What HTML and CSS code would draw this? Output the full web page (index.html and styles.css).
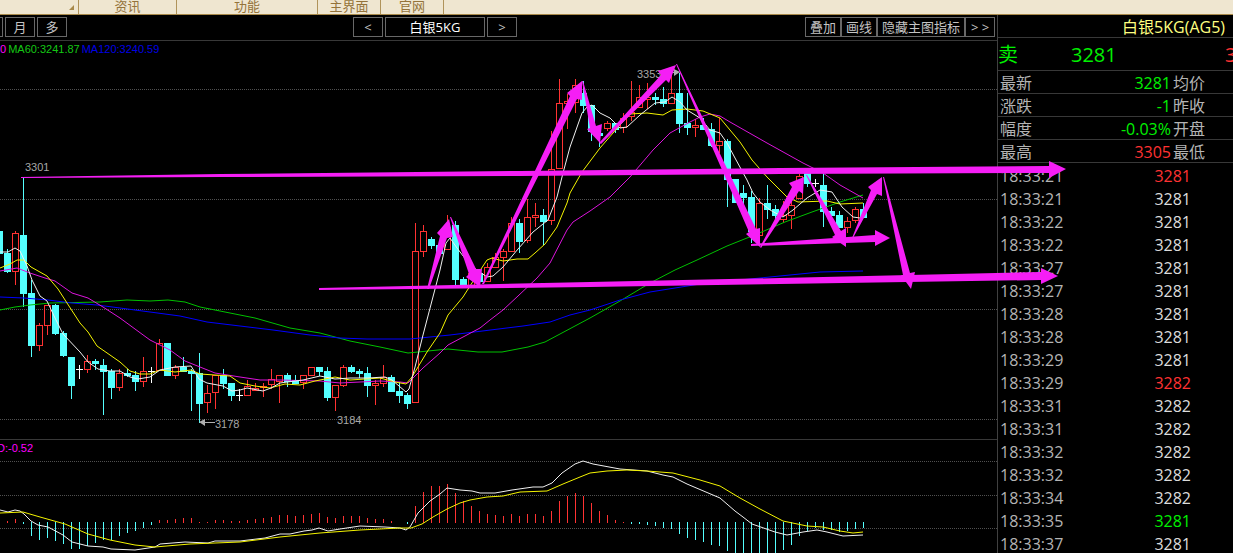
FILE: index.html
```html
<!DOCTYPE html>
<html lang="zh-CN">
<head>
<meta charset="utf-8">
<title>白银5KG</title>
<link rel="stylesheet" href="styles.css">
</head>
<body>
<nav class="menu">
  <span class="menu-item menu-corner"><svg class="corner" viewBox="0 0 5 5"><path d="M5 0V5H0Z"/></svg></span>
  <a class="menu-item menu-mid" href="#">资讯</a>
  <a class="menu-item menu-wide" href="#">功能</a>
  <a class="menu-item" href="#">主界面</a>
  <a class="menu-item" href="#">官网</a>
</nav>
<main class="workspace">
  <section class="charts">
    <div class="toolbar">
      <div class="group periods"><button class="btn btn-cut" aria-label="周"></button><button class="btn">月</button><button class="btn">多</button></div>
      <div class="group"><button class="btn">&lt;</button><button class="btn btn-name">白银5KG</button><button class="btn">&gt;</button></div>
      <div class="group tools"><button class="btn btn-tool">叠加</button><button class="btn btn-tool">画线</button><button class="btn btn-tool btn-long">隐藏主图指标</button><button class="btn">&gt; &gt;</button></div>
    </div>
    <div class="legend"><span class="c-magenta">0</span><span class="c-green">MA60:3241.87</span><span class="c-blue">MA120:3240.59</span></div>
    <svg class="plot" viewBox="0 59 997 380">
      <path class="grid" d="M0 89.500H997M0 199.500H997M0 309.500H997M0 419.500H997"/>
      <g id="candles"></g>
      <polyline class="line s-green" points="0,310 15,307 30,305 50,303 100,302 127,300 150,301 168,300 185,302 200,307 220,311 255,318 290,328 320,333 350,341 380,347 408,353 448,349 478,352 502,352 528,347 545,342 590,318 620,301 650,283 675,270 697,260 727,246 757,234 785,222 812,212 840,202 863,195"/>
      <polyline class="line s-blue" points="0,297 24,298 48,300 72,303 97,305 120,308 150,312 180,316 207,322 240,326 273,330 310,335 340,338 367,339 410,339 450,335 523,326 550,322 570,315 590,310 620,300 650,292 700,284 750,279 790,275 820,272 863,271"/>
      <polyline class="line s-magenta" points="0,271 17,268 30,273 45,278 55,281 72,293 88,298 103,307 120,318 150,340 170,350 185,361 200,367 215,373 240,377 260,380 280,380 320,381 340,383 360,382 380,381 400,382 408,383 423,368 440,353 448,345 480,328 490,320 503,310 518,296 537,278 550,263 567,230 573,222 590,211 610,197 630,177 653,150 670,133 690,122 700,117 710,114 720,116 730,122 767,143 803,163 823,173 840,185 863,198"/>
      <polyline class="line s-yellow" points="0,268 10,264 17,260 24,260 31,267 47,276 58,289 67,303 80,323 88,332 97,346 110,355 120,362 130,371 140,374 150,374 160,370 175,372 191,370 200,374 215,375 230,376 240,383 255,386 270,388 285,384 300,385 315,381 335,377 350,380 380,378 395,382 406,384 412,377 427,352 440,333 448,315 463,297 477,275 487,260 492,258 503,261 517,259 528,259 535,253 545,244 557,227 567,203 570,193 582,172 600,148 620,125 630,114 647,113 663,115 672,110 687,109 703,111 720,118 740,142 752,160 767,177 787,197 798,202 827,201 840,204 863,203"/>
      <polyline class="line s-white" points="0,252 8,252 15,248 20,251 27,266 32,280 40,296 47,301 55,318 63,334 80,352 88,362 98,369 110,371 120,371 130,377 138,379 150,377 160,370 175,367 191,366 199,379 207,383 223,386 232,391 240,390 247,388 263,391 271,388 280,383 295,381 303,380 320,376 335,379 350,378 368,378 385,377 392,380 399,386 406,392 409,389 415,367 423,335 440,270 446,243 450,238 457,248 470,265 487,277 493,276 503,267 518,249 533,232 548,220 557,197 563,173 570,147 582,113 587,107 592,105 600,113 610,118 620,128 627,127 640,115 655,103 665,102 672,97 680,102 687,110 700,118 710,130 720,133 727,143 735,158 747,180 753,193 760,202 770,210 783,217 793,210 807,198 820,190 832,192 842,207 853,217 860,218"/>
      <g class="note"><text x="25" y="171">3301</text><text x="215" y="428">3178</text><text x="337" y="424">3184</text><text x="637" y="78">3353</text></g>
      <path class="pointer" d="M215 422.500H203M662 72.500H676"/>
      <path class="pointer-head" d="M199 422L205 419V426ZM680 72L674 69V76Z"/>
    </svg>
    <div class="legend legend-sub"><span class="c-magenta">D:-0.52</span></div>
    <svg class="plot" viewBox="0 458 997 95">
      <path class="grid" d="M0 461.500H997M0 495.500H997M0 528.500H997"/>
      <g id="bars"></g>
      <polyline class="line s-white" points="0,510 8,512 15,510 20,511 24,514 31,521 38,525 48,527 63,535 72,542 80,544 88,546 103,547 111,549 135,550 155,547 160,544 185,542 208,543 215,541 240,541 265,538 280,534 290,534 304,531 312,530 319,528 328,531 340,529 360,526 385,527 400,528 406,530 410,527 418,513 430,501 440,494 447,488 460,490 472,491 480,493 495,493 512,490 533,487 543,487 552,483 562,473 575,464 583,461 593,464 620,469 647,471 663,475 673,477 687,484 720,498 735,511 743,517 752,524 775,532 787,535 803,532 817,530 827,532 843,536 863,535"/>
      <polyline class="line s-yellow" points="0,513 23,512 40,517 65,524 88,534 110,540 135,545 155,547 190,544 240,542 280,537 320,533 360,530 400,528 411,528 422,524 433,517 447,509 460,503 470,500 487,497 503,496 520,492 547,491 563,484 580,477 590,473 607,471 627,470 647,471 673,473 700,480 720,486 740,498 760,509 783,521 807,526 823,527 840,531 853,533 863,532"/>
    </svg>
  </section>
  <aside class="quote">
    <h1 class="symbol">白银5KG(AG5)</h1>
    <div class="ask"><span>卖</span><span class="ask-price">3281</span><span class="c-red">3282</span></div>
    <table class="stats">
      <tr><th>最新</th><td class="c-lime">3281</td><th>均价</th></tr>
      <tr><th>涨跌</th><td class="c-lime">-1</td><th>昨收</th></tr>
      <tr><th>幅度</th><td class="c-lime">-0.03%</td><th>开盘</th></tr>
      <tr><th>最高</th><td class="c-red">3305</td><th>最低</th></tr>
    </table>
    <table class="ticks">
      <tr><td>18:33:21</td><td class="c-red">3281</td></tr>
      <tr><td>18:33:21</td><td>3281</td></tr>
      <tr><td>18:33:22</td><td>3281</td></tr>
      <tr><td>18:33:22</td><td>3281</td></tr>
      <tr><td>18:33:27</td><td>3281</td></tr>
      <tr><td>18:33:27</td><td>3281</td></tr>
      <tr><td>18:33:28</td><td>3281</td></tr>
      <tr><td>18:33:28</td><td>3281</td></tr>
      <tr><td>18:33:29</td><td>3281</td></tr>
      <tr><td>18:33:29</td><td class="c-red">3282</td></tr>
      <tr><td>18:33:31</td><td>3282</td></tr>
      <tr><td>18:33:31</td><td>3282</td></tr>
      <tr><td>18:33:32</td><td>3282</td></tr>
      <tr><td>18:33:32</td><td>3282</td></tr>
      <tr><td>18:33:34</td><td>3282</td></tr>
      <tr><td>18:33:35</td><td class="c-lime">3281</td></tr>
      <tr><td>18:33:37</td><td>3281</td></tr>
    </table>
  </aside>
  <svg class="arrows" viewBox="0 15 1233 538">
    <path d="M21 177L220 174L520 171L780 168L1049 166V161L1066 169L1049 178V173L780 174L520 176L220 177L21 178Z"/>
    <path d="M319 288L590 282L780 278L1041 272V268L1058 276L1041 284V280L780 284L590 287L319 290Z"/>
    <path d="M427 289L440 236L437 233L449 219L453 237L447 238L429 289Z"/>
    <path d="M450 217L469 274L466 277L480 287L482 269L476 269L451 217Z"/>
    <path d="M482 284L570 96L567 93L582 81V100L577 99L484 284Z"/>
    <path d="M582 81L590 128L587 129L600 143L602 124L596 126L583 81Z"/>
    <path d="M599 143L661 75L658 71L676 65L669 83L666 80L601 144Z"/>
    <path d="M676 64L749 232L746 234L760 247V228L756 229L677 64Z"/>
    <path d="M760 247L792 187L789 183L804 177L803 194L799 191L761 248Z"/>
    <path d="M806 175L835 235L832 237L846 247V228L841 231L807 175Z"/>
    <path d="M751 244L875 235V230L890 238L875 246V242L751 246Z"/>
    <path d="M852 238L871 190L868 187L882 177V196L877 194L853 238Z"/>
    <path d="M883 177L903 275L901 275L911 289L915 272L910 273L884 177Z"/>
  </svg>
</main>
<script src="chart.js"></script>
</body>
</html>
```

FILE: styles.css
```css
* { box-sizing: border-box; }

body {
  margin: 0;
  overflow: hidden;
  background: #000;
  color: #b4b4b4;
  font-family: "Open Sans", "Noto Sans CJK SC", sans-serif;
}

.menu {
  display: flex;
  height: 15px;
  background: #efe6d0;
  border-bottom: 1px solid #a8894a;
}

.menu-item {
  width: 63px;
  border-right: 1px solid #b0935a;
  color: #94733a;
  font-size: 13px;
  line-height: 12px;
  text-align: center;
  text-decoration: none;
  white-space: nowrap;
}

.menu-corner { display: flex; width: 79px; justify-content: flex-end; align-items: flex-end; padding: 0 4px 4px 0; }
.menu-mid { width: 98px; }
.menu-wide { width: 141px; }
.corner { width: 5px; height: 5px; fill: #a8894a; }

.workspace {
  position: relative;
  display: flex;
  height: calc(100vh - 15px);
  overflow: hidden;
}

.charts { flex: 1; min-width: 0; }

.toolbar {
  display: grid;
  grid-template-columns: 353px auto 1fr;
  height: 26px;
  padding-top: 2px;
  border-bottom: 1px solid #383838;
}

.group { display: flex; gap: 2px; }
.tools { justify-content: flex-end; gap: 0; padding-right: 2px; }

.btn {
  width: 30px;
  height: 20px;
  padding: 0;
  border: 1px solid #686868;
  background: #000;
  color: #c4c4c4;
  font: 13px/16px "Open Sans", "Noto Sans CJK SC", sans-serif;
  white-space: nowrap;
}

.btn-cut { width: 3px; border-left: 0; }
.btn-name { width: 100px; color: #fff; }
.btn-tool { width: 36px; }
.btn-long { width: 88px; }

.legend {
  display: flex;
  gap: 2px;
  height: 18px;
  font: 11px/17px "Liberation Sans", Arial, sans-serif;
}

.legend-sub { height: 19px; border-top: 1px solid #383838; }
.legend-sub span { margin-left: -3px; }

.plot { display: block; width: 100%; }

.grid { stroke: #505050; stroke-dasharray: 1 1; shape-rendering: crispEdges; }
.line { fill: none; stroke-width: 1; }
.s-white { stroke: #f0f0f0; }
.s-yellow { stroke: #f4f400; }
.s-magenta { stroke: #dc14dc; }
.s-green { stroke: #00c000; }
.s-blue { stroke: #0000ff; }

.note { fill: #a8a8a8; font: 11px "Liberation Sans", Arial, sans-serif; }
.pointer { stroke: #b0b0b0; }
.pointer-head { fill: #b0b0b0; }

.up, .down, .flat { shape-rendering: crispEdges; }
.up { fill: none; stroke: #ff3232; }
.down { fill: #54ffff; stroke: #54ffff; }
.flat { stroke: #fff; }

.c-magenta { color: #f0f; }
.c-green { color: #14c814; }
.c-blue { color: #0000e6; }

.quote {
  width: 236px;
  overflow: hidden;
  border-left: 1px solid #404040;
}

.symbol {
  height: 23px;
  margin: 0;
  padding-right: 8px;
  border-bottom: 1px solid #383838;
  color: #ffff80;
  font-size: 16px;
  font-weight: 400;
  line-height: 24px;
  text-align: right;
}

.ask {
  display: flex;
  height: 33px;
  border-bottom: 1px solid #383838;
  color: #00f000;
  font-size: 20px;
  line-height: 33px;
}

.ask span { flex: none; }
.ask span:first-child { width: 73px; }
.ask-price { width: 154px; font-weight: 500; }

.stats, .ticks { border-spacing: 0; table-layout: fixed; width: 100%; font-size: 16px; line-height: 20px; }
.stats th, .stats td { height: 23px; padding: 2px 0 0; border-bottom: 1px solid #383838; }
.stats th {
  width: 60px;
  padding-left: 2px;
  font-weight: 400;
  text-align: left;
}
.stats td { width: 113px; text-align: right; }
.stats th:last-child { width: auto; }

.ticks td { height: 23px; padding: 2px 0 0 2px; }
.ticks td:last-child { padding: 2px 42px 0 0; text-align: right; }
.ticks td:last-child:not([class]) { color: #dcdcdc; }

.stats .c-lime, .ticks .c-lime { color: #00f000; }
.c-red { color: #ff3232; }

.arrows {
  position: absolute;
  top: 0;
  left: 0;
  width: 100%;
  pointer-events: none;
  fill: #f51ef5;
}
```

FILE: chart.js
```js
// Each candle: kind (c = falling, r = rising, x = flat), high, body top, body bottom, low.
const candles = `c 231 231 254 254|c 249 253 272 273|r 231 233 272 285|c 178 235 294 307|c 280 293 346 357|r 323 325 346 351|r 305 305 326 335|c 304 305 334 335|c 331 333 356 357|c 357 357 386 399|x 365 369 369 379|r 355 361 370 373|c 359 361 364 370|c 359 365 372 415|c 369 371 388 399|r 369 373 388 391|c 369 373 376 377|c 371 375 382 391|r 357 371 382 387|x 367 371 371 383|r 339 343 371 371|c 343 343 376 376|r 365 367 376 379|c 357 367 372 372|c 369 371 374 411|c 353 373 404 423|r 385 393 403 413|r 375 375 393 409|c 369 375 384 389|c 383 383 396 401|x 389 395 395 401|r 380 386 396 396|r 383 388 391 391|r 383 386 388 397|r 369 379 385 389|r 375 375 382 403|c 373 375 382 387|c 375 380 384 384|r 375 375 383 389|r 367 367 376 376|c 367 367 372 376|c 367 371 398 401|r 385 385 398 411|r 365 367 386 387|c 365 367 372 373|c 369 371 374 378|c 367 373 386 397|r 380 383 386 405|r 365 377 384 387|c 375 377 392 392|c 382 391 396 403|c 393 395 404 409|r 223 251 403 403|r 225 231 252 257|c 237 239 246 249|c 245 245 254 254|r 215 227 250 250|c 221 225 280 285|c 277 279 287 287|r 273 273 287 287|c 269 273 282 282|r 263 267 282 282|r 253 257 268 268|r 249 251 258 281|r 217 223 252 252|c 219 223 242 253|r 199 217 241 243|r 203 215 218 227|c 209 215 222 245|r 131 169 221 225|r 79 103 169 169|r 94 101 104 129|r 79 85 103 113|c 81 93 106 113|c 105 105 132 141|c 133 133 136 147|r 121 123 129 131|c 123 123 130 133|r 113 118 128 133|r 81 112 117 121|r 85 97 108 108|r 83 97 100 109|c 93 97 100 105|c 87 99 104 107|r 74 93 104 104|c 73 93 124 133|c 93 123 128 135|r 119 125 128 137|c 118 125 130 130|c 123 129 146 147|r 118 141 146 153|c 139 141 180 207|c 179 179 203 203|c 185 193 198 210|c 191 197 232 243|r 198 203 236 242|c 185 203 210 219|c 205 209 216 220|r 201 215 220 223|r 200 205 216 229|r 174 176 199 199|c 173 173 184 187|x 179 183 183 187|c 174 185 212 227|c 207 211 216 216|c 211 215 228 228|r 217 221 228 233|r 207 209 221 223|c 203 209 218 218`;

document.getElementById("candles").innerHTML = candles.split("|").map((entry, i) => {
  const [kind, ...values] = entry.split(" ");
  const [high, top, bottom, low] = values.map(Number);
  const x = 8 * i - 1;
  const mid = x + 0.5;
  if (kind === "x") {
    return `<path class="flat" d="M${mid} ${high}V${low}M${x - 3} ${top + 0.5}H${x + 4}"/>`;
  }
  const cls = kind === "r" ? "up" : "down";
  return `<path class="${cls}" d="M${mid} ${high}V${top}M${mid} ${bottom}V${low}M${x - 2.5} ${top + 0.5}H${x + 3.5}V${bottom - 0.5}H${x - 2.5}Z"/>`;
}).join("");

// End position of each histogram bar; bars start from the zero line.
const zero = 523;
const bars = [521,519,524,536,540,538,541,544,549,549,546,543,540,540,536,533,531,528,525,520,520,519,518,518,522,522,520,520,521,521,520,519,518,517,515,515,516,515,514,513,517,518,516,516,516,518,519,519,521,523,524,506,492,486,486,484,493,501,506,511,514,515,516,514,516,514,514,516,511,501,496,493,496,503,511,515,520,522,524,524,525,526,528,529,534,538,540,542,545,546,551,553,553,553,553,553,553,550,545,536,531,528,530,530,532,531,529,528];

document.getElementById("bars").innerHTML = bars.map((end, i) => {
  const start = end > zero ? zero - 1 : zero;
  return `<path class="${end > zero ? "down" : "up"}" d="M${8 * i + 7.5} ${start}V${end}"/>`;
}).join("");
```
